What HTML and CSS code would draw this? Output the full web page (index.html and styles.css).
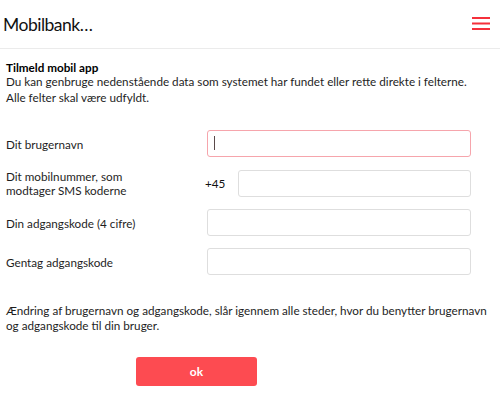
FILE: index.html
```
<!DOCTYPE html>
<html lang="da">
<head>
	<meta charset="utf-8">
	<title>Mobilbank</title>
	<link rel="stylesheet" href="styles.css">
</head>
<body>
	<div id="header">
		<span class="title">Mobilbank…</span>
		<span class="menu">
			<svg width="18" height="13" viewBox="0 0 18 13">
				<rect x="0" y="0" width="18" height="2" fill="#f5303b"/>
				<rect x="0" y="5.5" width="18" height="2" fill="#f5303b"/>
				<rect x="0" y="11" width="18" height="2" fill="#f5303b"/>
			</svg>
		</span>
	</div>

	<div id="content">
		<div class="intro-title">Tilmeld mobil app</div>
		<p class="intro">Du kan genbruge nedenstående data som systemet har fundet eller rette direkte i felterne.<br>
		Alle felter skal være udfyldt.</p>

		<div class="form">
			<label class="label">Dit brugernavn</label>
			<div class="field"><input type="text" class="input focus"><span class="cursor"></span></div>

			<label class="label">Dit mobilnummer, som<br>modtager SMS koderne</label>
			<div class="field phone"><span class="prefix">+45</span><input type="text" class="input"></div>

			<label class="label">Din adgangskode (4 cifre)</label>
			<div class="field"><input type="password" class="input"></div>

			<label class="label">Gentag adgangskode</label>
			<div class="field"><input type="password" class="input"></div>
		</div>

		<p class="note">Ændring af brugernavn og adgangskode, slår igennem alle steder, hvor du benytter brugernavn og adgangskode til din bruger.</p>

		<button class="ok">ok</button>
	</div>
</body>
</html>
```

FILE: styles.css
```
html {
	height: 100%;
}

body {
	margin: 0;
	padding: 0;
	background: #ffffff;
	color: #1e1e1e;
	font-family: Lato, "Open Sans", sans-serif;
	font-size: 11.7px;
	line-height: 16px;
}

#header {
	height: 48px;
	display: flex;
	align-items: center;
	justify-content: space-between;
	padding: 0 10px 0 3px;
	border-bottom: 1px solid #ebebeb;
}

#header .title {
	font-size: 17.5px;
	letter-spacing: -0.5px;
	color: #111;
	margin-top: 1px;
}

#header .menu {
	display: flex;
	margin-top: -1px;
}

#content {
	padding: 0 6px;
}

.intro-title {
	margin-top: 12px;
	line-height: 12px;
	font-weight: bold;
	color: #000;
}

.intro {
	margin: 0;
}

.form {
	display: grid;
	grid-template-columns: 201px 264px;
	align-items: center;
	row-gap: 12px;
	margin-top: 25px;
}

.label {
	line-height: 14px;
}

.field {
	display: flex;
	align-items: center;
	position: relative;
}

.input {
	box-sizing: border-box;
	width: 100%;
	height: 27px;
	margin: 0;
	border: 1px solid #dedede;
	border-radius: 3px;
	background: #fff;
	font: 12px Lato, sans-serif;
	outline: none;
}

.input.focus {
	border-color: #f6a5ac;
}

.cursor {
	position: absolute;
	left: 7px;
	top: 6px;
	width: 1px;
	height: 14px;
	background: #5a4a4a;
}

.phone {
	margin-left: -2px;
}

.prefix {
	width: 33px;
	flex: none;
	color: #111;
}

.note {
	margin: 28px 0 0 0;
	line-height: 15px;
}

.ok {
	display: block;
	margin: 24px 0 0 130px;
	width: 121px;
	height: 29px;
	border: 0;
	border-radius: 3px;
	background: #fd4b51;
	color: #fff;
	font: bold 12px Lato, sans-serif;
}
```
